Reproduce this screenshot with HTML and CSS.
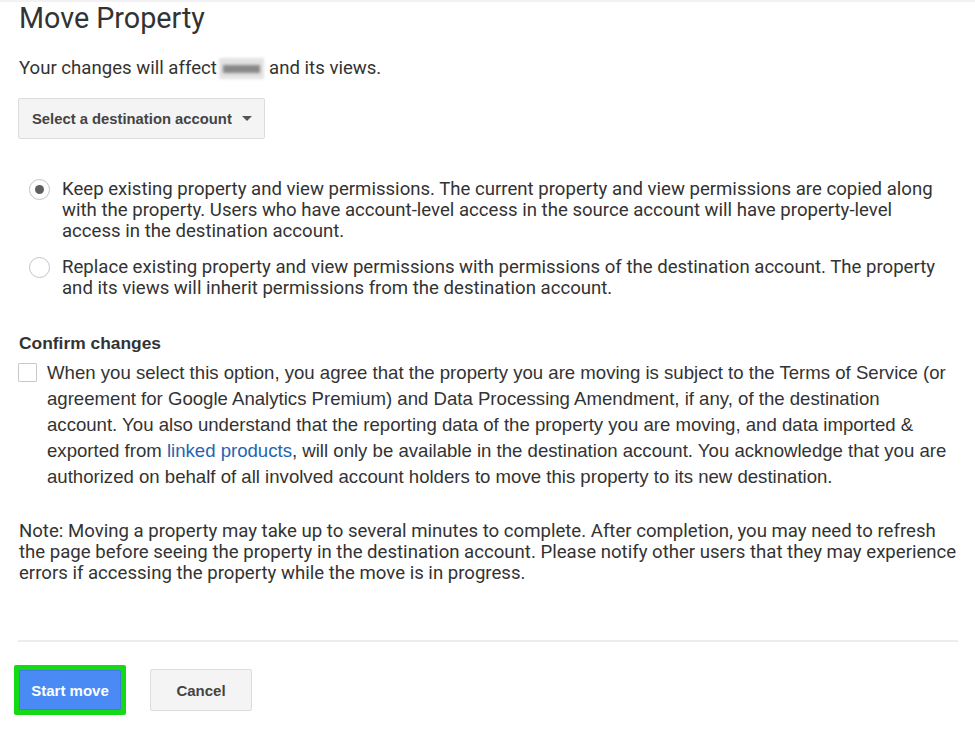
FILE: index.html
```html
<!DOCTYPE html>
<html>
<head>
<meta charset="utf-8">
<link rel="stylesheet" href="styles.css">
</head>
<body>
<div class="page">
  <h1 class="title">Move Property</h1>
  <p class="affect">Your changes will affect <span class="blur"><span class="blur-bar"></span></span> and its views.</p>
  <button class="select-btn">Select a destination account <span class="caret"></span></button>

  <div class="radios">
    <div class="radio-row">
      <span class="radio checked"></span>
      <div class="radio-text">Keep existing property and view permissions. The current property and view permissions are copied along with the property. Users who have account-level access in the source account will have property-level access in the destination account.</div>
    </div>
    <div class="radio-row">
      <span class="radio"></span>
      <div class="radio-text">Replace existing property and view permissions with permissions of the destination account. The property and its views will inherit permissions from the destination account.</div>
    </div>
  </div>

  <h2 class="confirm-title">Confirm changes</h2>
  <div class="check-row">
    <span class="checkbox"></span>
    <div class="check-text">When you select this option, you agree that the property you are moving is subject to the Terms of Service (or agreement for Google Analytics Premium) and Data Processing Amendment, if any, of the destination account. You also understand that the reporting data of the property you are moving, and data imported &amp; exported from <a class="link" href="#">linked products</a>, will only be available in the destination account. You acknowledge that you are authorized on behalf of all involved account holders to move this property to its new destination.</div>
  </div>

  <p class="note">Note: Moving a property may take up to several minutes to complete. After completion, you may need to refresh the page before seeing the property in the destination account. Please notify other users that they may experience errors if accessing the property while the move is in progress.</p>

  <div class="divider"></div>

  <div class="actions">
    <span class="focus-ring"><button class="btn-primary">Start move</button></span>
    <button class="btn-cancel">Cancel</button>
  </div>
</div>
</body>
</html>
```
FILE: styles.css
```css
html, body {
  margin: 0;
  padding: 0;
  background: #fff;
}
body {
  font-family: Roboto, "Liberation Sans", sans-serif;
  color: #333;
  border-top: 2px solid #f2f2f2;
}
.page {
  padding: 0 17px 0 19px;
}
.title {
  font-family: Roboto, sans-serif;
  font-weight: 400;
  font-size: 28.7px;
  line-height: 32px;
  margin: 0;
  color: #333;
}
.affect {
  font-size: 18.6px;
  line-height: 21px;
  height: 21px;
  margin: 24px 0 0 0;
}
.blur {
  display: inline-block;
  vertical-align: -5px;
  width: 45px;
  height: 21px;
  margin-left: -2px;
  background: #e2e2e2;
  filter: blur(1.5px);
  position: relative;
}
.blur-bar {
  position: absolute;
  left: 4px;
  right: 4px;
  top: 7px;
  height: 8px;
  background: #888;
}
.select-btn {
  margin-top: 19px;
  display: flex;
  align-items: center;
  gap: 10px;
  height: 41px;
  padding: 0 12px 0 13px;
  margin-left: -1px;
  background: #f4f4f4;
  border: 1px solid #dcdcdc;
  border-radius: 2px;
  font-family: "Liberation Sans", Arial, sans-serif;
  font-weight: 700;
  font-size: 14.8px;
  color: #444;
}
.caret {
  width: 0;
  height: 0;
  border-left: 5px solid transparent;
  border-right: 5px solid transparent;
  border-top: 5px solid #555;
}
.radios {
  margin-top: 40px;
  display: flex;
  flex-direction: column;
  gap: 15px;
}
.radio-row {
  display: flex;
  align-items: flex-start;
  gap: 12px;
}
.radio {
  flex: none;
  box-sizing: border-box;
  width: 21px;
  height: 21px;
  margin-left: 10px;
  border: 1px solid #c4c4c4;
  border-radius: 50%;
  background: #fff;
  display: flex;
  align-items: center;
  justify-content: center;
}
.radio.checked::after {
  content: "";
  width: 9px;
  height: 9px;
  border-radius: 50%;
  background: #5f5f5f;
}
.radio-text {
  font-size: 18.6px;
  line-height: 21px;
  max-width: 882px;
}
.confirm-title {
  font-family: "Liberation Sans", Arial, sans-serif;
  font-weight: 700;
  font-size: 17.4px;
  line-height: 20px;
  margin: 34px 0 0 0;
  color: #333;
}
.check-row {
  display: flex;
  align-items: flex-start;
  gap: 10px;
  margin-top: 7px;
}
.checkbox {
  flex: none;
  box-sizing: border-box;
  width: 19px;
  height: 19px;
  margin-top: 3px;
  margin-left: -1px;
  border: 1px solid #c8c8c8;
  border-radius: 1px;
  background: #fff;
}
.check-text {
  font-family: "Liberation Sans", Arial, sans-serif;
  font-size: 18.6px;
  line-height: 26px;
  max-width: 903px;
}
.link {
  color: #1e65b0;
  text-decoration: none;
}
.note {
  font-size: 18.6px;
  line-height: 21px;
  margin: 31px 0 0 0;
  max-width: 941px;
}
.divider {
  margin-top: 56px;
  height: 2px;
  background: #ececec;
  margin-left: -1px;
}
.actions {
  display: flex;
  align-items: center;
  gap: 24px;
  margin-top: 23px;
}
.focus-ring {
  display: inline-flex;
  margin-left: -5px;
  padding: 5px;
  background: #16d916;
  border-radius: 2px;
}
.btn-primary {
  width: 102px;
  height: 40px;
  background: #4a8af4;
  border: 1px solid #3e7ce0;
  border-radius: 1px;
  color: #fff;
  font-family: "Liberation Sans", Arial, sans-serif;
  font-weight: 700;
  font-size: 15px;
}
.btn-cancel {
  width: 102px;
  height: 42px;
  background: #f4f4f4;
  border: 1px solid #dcdcdc;
  border-radius: 2px;
  color: #444;
  font-family: "Liberation Sans", Arial, sans-serif;
  font-weight: 700;
  font-size: 15px;
}
```
